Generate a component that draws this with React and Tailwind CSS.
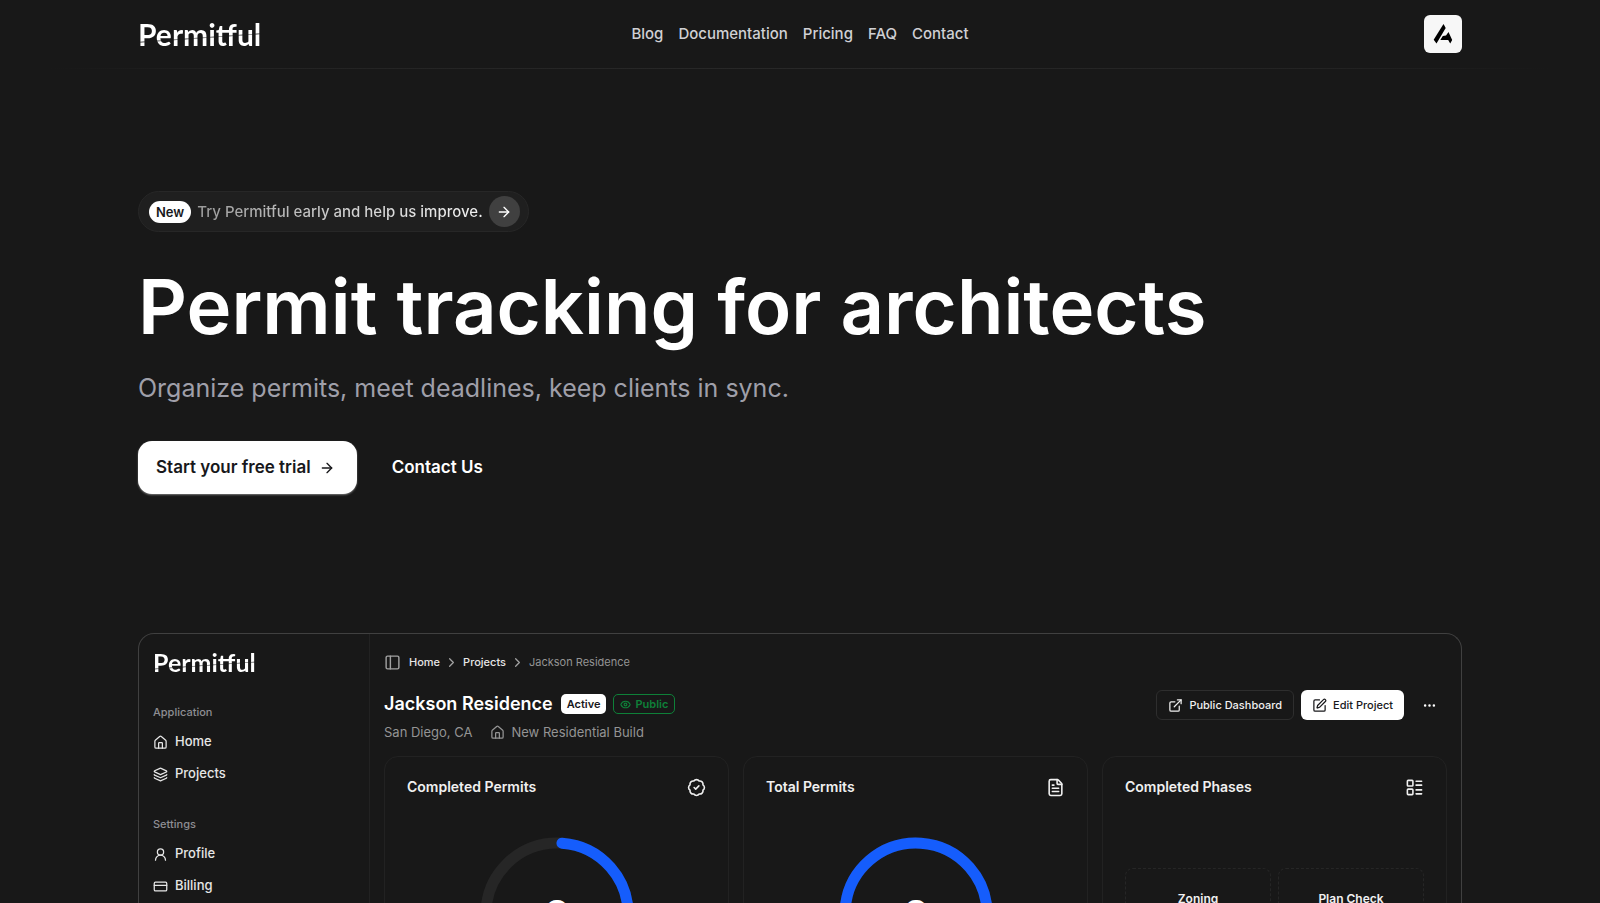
import {
  ArrowRight,
  BadgeCheck,
  ChevronRight,
  CreditCard,
  Ellipsis,
  ExternalLink,
  Eye,
  FileText,
  House,
  Layers,
  LayoutList,
  PanelLeft,
  SquarePen,
  UserRound,
} from "lucide-react";

const NAV_LINKS = ["Blog", "Documentation", "Pricing", "FAQ", "Contact"];

const SIDEBAR = [
  {
    title: "Application",
    items: [
      { label: "Home", icon: House },
      { label: "Projects", icon: Layers },
    ],
  },
  {
    title: "Settings",
    items: [
      { label: "Profile", icon: UserRound },
      { label: "Billing", icon: CreditCard },
    ],
  },
];

const PHASES = ["Zoning", "Plan Check"];

// Wordmark with a thin stencil cut running through the letters
function Wordmark({ className }) {
  return (
    <a
      href="#"
      className={`block w-fit bg-[linear-gradient(176deg,#fff_57%,#999_58%,#999_60%,#fff_61%)] bg-clip-text font-[Lato,sans-serif] font-bold text-transparent ${className}`}
    >
      Permitful
    </a>
  );
}

function AvatarMark() {
  return (
    <svg viewBox="0 0 38 38" className="size-full" aria-hidden="true">
      <path d="M19.500 9 21.700 13 12.500 28.500 9.700 24.800z" fill="#000" />
      <path d="M24.500 17 28.200 25 26.200 28.500 24.200 25H16.300L18.800 21 22 20.500z" fill="#000" />
    </svg>
  );
}

function Header() {
  return (
    <header>
      <div className="mx-auto grid h-17 max-w-[1372px] grid-cols-3 items-center px-6">
        <Wordmark className="text-[30px] leading-9" />
        <nav className="flex justify-center gap-[15px] text-[15px] leading-5 font-medium text-[#d0d0d4]">
          {NAV_LINKS.map((link) => (
            <a key={link} href="#">
              {link}
            </a>
          ))}
        </nav>
        <button
          type="button"
          aria-label="Account"
          className="size-[38px] justify-self-end overflow-hidden rounded-md bg-[#f7f7f7]"
        >
          <AvatarMark />
        </button>
      </div>
      <div className="mx-auto h-px max-w-[1500px] bg-[linear-gradient(90deg,transparent,#232323_15%,#282828_50%,#232323_85%,transparent)]" />
    </header>
  );
}

function Hero() {
  return (
    <section className="pt-[122px]">
      <a
        href="#"
        className="inline-flex h-[41px] items-center gap-1.5 rounded-full border border-[#272727] bg-[#1f1f1f] pr-2 pl-2.5"
      >
        <span className="rounded-full bg-white px-[7px] text-[13px] leading-[22px] font-semibold text-[#18181b]">
          New
        </span>
        <span className="bg-linear-to-r from-[#9a9a9a] via-[#cfcfcf] to-[#f0f0f0] bg-clip-text text-[15px] leading-5 font-medium text-transparent">
          Try Permitful early and help us improve.
        </span>
        <span className="flex size-[31px] items-center justify-center rounded-full bg-[#404040] text-white">
          <ArrowRight className="size-4" />
        </span>
      </a>
      <h1 className="mt-[30px] text-[76px] leading-[88px] font-semibold text-white">
        Permit tracking for architects
      </h1>
      <p className="mt-5 text-[25px] leading-9 text-[#9f9fa9]">
        Organize permits, meet deadlines, keep clients in sync.
      </p>
      <div className="mt-[35px] flex items-center gap-[35px]">
        <button
          type="button"
          className="flex h-[53px] items-center gap-2 rounded-[14px] bg-white pr-[22px] pl-[18px] text-[17px] font-semibold text-[#18181b] shadow-[0_1px_2px_#777]"
        >
          Start your free trial
          <ArrowRight className="size-4" />
        </button>
        <a href="#" className="text-[17px] font-semibold text-white">
          Contact Us
        </a>
      </div>
    </section>
  );
}

function Sidebar() {
  return (
    <aside className="w-[231px] shrink-0 border-r border-[#222] px-[14px] pt-3">
      <Wordmark className="text-[25px] leading-8" />
      {SIDEBAR.map((group) => (
        <div key={group.title} className="mb-[26px] pt-6 first-of-type:mb-0">
          <h3 className="mb-1 text-[11px] leading-5 font-medium text-[#8e8e93]">{group.title}</h3>
          {group.items.map(({ label, icon: Icon }) => (
            <a key={label} href="#" className="flex h-8 items-center gap-[7px] text-[13px] font-medium text-[#e6e6e6]">
              <Icon className="size-[15px]" />
              {label}
            </a>
          ))}
        </div>
      ))}
    </aside>
  );
}

function StatCard({ title, icon: Icon, children }) {
  return (
    <div className="h-[320px] rounded-[14px] border border-[#222] px-[22px] pt-5">
      <div className="flex items-center justify-between text-[#f0f0f0]">
        <h3 className="text-[14px] leading-5 font-semibold">{title}</h3>
        <Icon className="size-[19px]" />
      </div>
      {children}
    </div>
  );
}

// progress goes from 0 to 1, clockwise from the top
function Ring({ value, progress }) {
  return (
    <div className="mt-10 flex justify-center">
      <svg viewBox="0 0 154 154" className="size-[154px]" role="img" aria-label={String(value)}>
        <circle cx="77" cy="77" r="71" fill="none" stroke="#262626" strokeWidth="11" />
        <circle
          cx="77"
          cy="77"
          r="71"
          fill="none"
          stroke="#155dfc"
          strokeWidth="11"
          strokeLinecap="round"
          pathLength="100"
          strokeDasharray={`${progress * 100} 100`}
          transform="rotate(-86 77 77)"
        />
        <text x="77" y="91" textAnchor="middle" fontSize="38" fontWeight="700" fill="#fff">
          {value}
        </text>
      </svg>
    </div>
  );
}

function Dashboard() {
  return (
    <section className="mt-[139px] flex overflow-hidden rounded-t-2xl border border-b-0 border-[#404040]">
      <Sidebar />
      <div className="min-w-0 flex-1 px-[14px] pt-[18px]">
        <nav aria-label="Breadcrumb" className="flex items-center gap-1 text-[11px] leading-5 font-medium text-[#e6e6e6]">
          <PanelLeft className="mr-1 size-[17px] text-[#a1a1a1]" />
          <a href="#">Home</a>
          <ChevronRight className="size-[15px] text-[#a1a1a1]" />
          <a href="#">Projects</a>
          <ChevronRight className="size-[15px] text-[#a1a1a1]" />
          <span className="font-normal text-[#949494]">Jackson Residence</span>
        </nav>

        <div className="mt-[18px] flex justify-between">
          <div className="pt-0.5">
            <div className="flex items-center">
              <h2 className="mr-2 text-[18px] leading-6 font-semibold text-white">Jackson Residence</h2>
              <span className="mr-[7px] rounded-[5px] bg-white px-1.5 text-[11px] leading-5 font-semibold text-[#18181b]">
                Active
              </span>
              <span className="flex items-center gap-1 rounded-[5px] border border-[#0e8038] px-1.5 text-[11px] leading-[18px] font-semibold text-[#0e8038]">
                <Eye className="size-[11px]" strokeWidth={2.5} />
                Public
              </span>
            </div>
            <div className="mt-1.5 flex items-center text-[13px] leading-5 text-[#949494]">
              <span className="mr-[18px]">San Diego, CA</span>
              <House className="mr-1.5 size-[15px]" />
              <span>New Residential Build</span>
            </div>
          </div>
          <div className="flex h-[30px] items-center gap-[7px] text-[11px] font-medium">
            <button
              type="button"
              className="flex h-[30px] items-center gap-1.5 rounded-md border border-[#2e2e2e] px-[11px] text-[#f0f0f0]"
            >
              <ExternalLink className="size-[15px]" />
              Public Dashboard
            </button>
            <button
              type="button"
              className="flex h-[30px] items-center gap-1.5 rounded-md bg-white px-[11px] text-[#18181b]"
            >
              <SquarePen className="size-[15px]" />
              Edit Project
            </button>
            <button type="button" aria-label="More" className="flex w-9 justify-center text-white">
              <Ellipsis className="size-[15px]" />
            </button>
          </div>
        </div>

        <div className="mt-[14px] grid grid-cols-3 gap-[14px]">
          <StatCard title="Completed Permits" icon={BadgeCheck}>
            <Ring value={3} progress={0.5} />
          </StatCard>
          <StatCard title="Total Permits" icon={FileText}>
            <Ring value={8} progress={1} />
          </StatCard>
          <StatCard title="Completed Phases" icon={LayoutList}>
            <div className="mt-[71px] grid grid-cols-2 gap-[7px]">
              {PHASES.map((phase) => (
                <div
                  key={phase}
                  className="h-24 rounded-lg border border-dashed border-[#262626] pt-5 text-center text-[12px] leading-5 font-semibold text-[#f0f0f0]"
                >
                  {phase}
                </div>
              ))}
            </div>
          </StatCard>
        </div>
      </div>
    </section>
  );
}

export default function App() {
  return (
    <div className="h-screen overflow-hidden bg-[#181818] font-[Inter,sans-serif] antialiased">
      <Header />
      <main className="mx-auto max-w-[1372px] px-6">
        <Hero />
        <Dashboard />
      </main>
    </div>
  );
}
